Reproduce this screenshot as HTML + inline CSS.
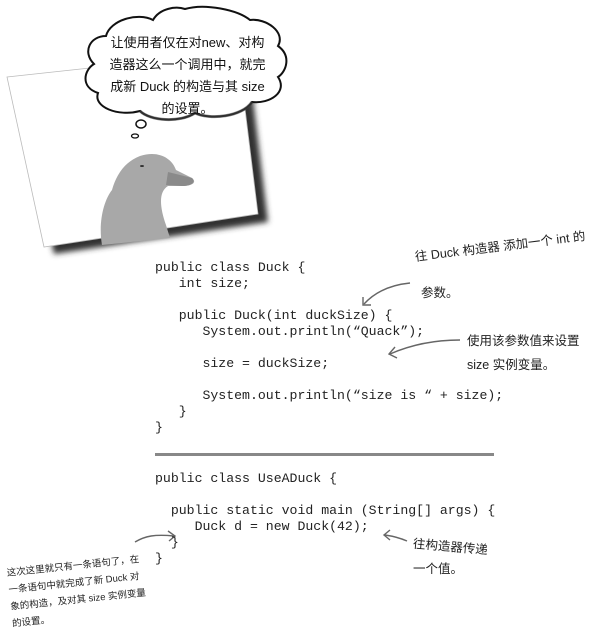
<!DOCTYPE html>
<html><head><meta charset="utf-8"><style>
body{margin:0;width:601px;height:636px;background:#fff;position:relative;overflow:hidden;font-family:"Liberation Sans","Noto Sans CJK SC",sans-serif;}
.code{position:absolute;left:155px;font-family:"Liberation Mono","Courier New",monospace;font-size:13.2px;color:#222;white-space:pre;line-height:16px;}
.a{position:absolute;font-size:12.5px;color:#222;white-space:nowrap;}
</style></head><body>
<svg width="601" height="636" style="position:absolute;left:0;top:0">
<defs><filter id="sh" x="-20%" y="-20%" width="140%" height="140%"><feGaussianBlur stdDeviation="3"/></filter></defs>
<polygon points="14,80 244,55 264,218 50,250" fill="#333" filter="url(#sh)" transform="translate(4,4)"/>
<polygon points="7,77 238,52 258,214 44,247" fill="#fff" stroke="#bbb" stroke-width="0.8"/>
<path d="M102,245 C98,222 104,200 112,190 C116,176 124,162 140,156 C158,150 172,158 176,170 L192,178 C197,182 193,186 182,186 L168,186 C158,192 160,208 166,225 L170,238 Z" fill="#a8a8a8"/>
<path d="M168,172 L192,178 C196,182 192,186 182,186 L166,185 Z" fill="#8a8a8a"/>
<ellipse cx="142" cy="166" rx="2" ry="1" fill="#333"/>
<path d="M185,9 C205,3 238,10 250,20 C266,18 286,32 278,46 C292,56 286,72 278,77 C288,92 270,104 252,102 C242,117 210,120 195,113 C180,123 150,121 140,111 C118,117 93,107 98,93 C80,87 84,70 94,64 C82,52 90,36 106,36 C110,20 138,12 153,20 C160,8 176,6 185,9 Z" fill="#fff" stroke="#111" stroke-width="2"/>
<path d="M252,102 C242,117 210,120 195,113 C180,123 150,121 140,111" fill="none" stroke="#444" stroke-width="3" opacity=".6"/>
<ellipse cx="141" cy="124" rx="5" ry="4" fill="#fff" stroke="#111" stroke-width="1.5"/>
<ellipse cx="135" cy="136" rx="3.5" ry="2" fill="#fff" stroke="#111" stroke-width="1.3"/>
<rect x="155" y="453" width="339" height="3" fill="#888"/>
<g fill="none" stroke="#666" stroke-width="1.4">
<path d="M410,283 C390,285 375,292 364,304"/><path d="M363,297 L363,305 L371,305"/>
<path d="M460,340 C440,340 415,343 390,354"/><path d="M395,347 L389,354 L397,358"/>
<path d="M135,542 C145,536 155,534 174,536"/><path d="M168,531 L175,536 L169,541"/>
<path d="M407,541 C400,538 392,536 385,535"/><path d="M390,530 L384,535 L390,540"/>
</g>
</svg>
<div class="a" style="left:100px;top:32px;width:175px;text-align:center;font-size:13px;line-height:22px;color:#111">让使用者仅在对new、对构<br>造器这么一个调用中，就完<br>成新 Duck 的构造与其 size<br>的设置。</div>
<div class="code" style="top:260px">public class Duck {
   int size;

   public Duck(int duckSize) {
      System.out.println(“Quack”);

      size = duckSize;

      System.out.println(“size is “ + size);
   }
}</div>
<div class="code" style="top:471px">public class UseADuck {

  public static void main (String[] args) {
     Duck d = new Duck(42);
  }
}</div>
<div class="a" style="left:416px;top:246px;transform:rotate(-7deg);transform-origin:0 100%">往 Duck 构造器 添加一个 int 的</div>
<div class="a" style="left:421px;top:282px">参数。</div>
<div class="a" style="left:467px;top:330px">使用该参数值来设置</div>
<div class="a" style="left:467px;top:354px">size 实例变量。</div>
<div class="a" style="left:413px;top:536px;transform:rotate(5deg)">往构造器传递</div>
<div class="a" style="left:413px;top:558px">一个值。</div>
<div class="a" style="left:6px;top:565px;font-size:9.5px;line-height:17px;transform:rotate(-6deg);transform-origin:0 0;width:150px">这次这里就只有一条语句了，在<br>一条语句中就完成了新 Duck 对<br>象的构造，及对其 size 实例变量<br>的设置。</div>
</body></html>
